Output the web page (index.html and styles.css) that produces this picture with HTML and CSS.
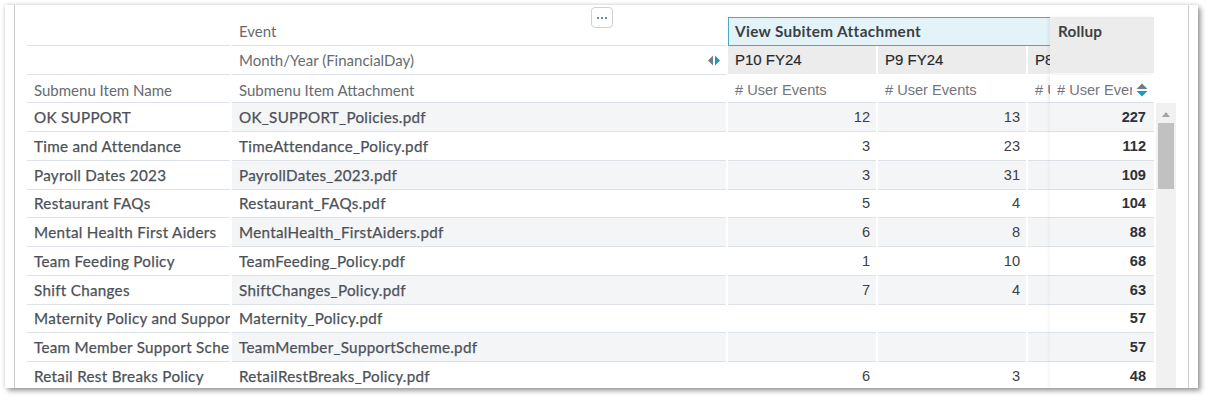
FILE: index.html
```html
<!DOCTYPE html>
<html lang="en">
<head>
<meta charset="utf-8">
<title>Submenu Attachments</title>
<link rel="stylesheet" href="styles.css">
</head>
<body>
<div class="panel">
  <div class="frame">
    <button class="more" type="button"><span class="dot"></span><span class="dot"></span><span class="dot"></span></button>
    <div class="grid">
      <!-- header row 1 -->
      <div class="hc c1 r1"></div>
      <div class="hc c2 r1 lbl">Event</div>
      <div class="group">View Subitem Attachment</div>
      <div class="rollup-h">Rollup</div>

      <!-- header row 2 -->
      <div class="hc c1 r2"></div>
      <div class="hc c2 r2 lbl split">
        <span>Month/Year (FinancialDay)</span>
        <svg class="swap" width="12" height="11" viewBox="0 0 12 11"><path d="M5 0.5 L0 5.5 L5 10.5 Z" fill="#6d7d8b"/><path d="M7 0.5 L12 5.5 L7 10.5 Z" fill="#1a97c3"/></svg>
      </div>
      <div class="period c3">P10 FY24</div>
      <div class="period c4">P9 FY24</div>
      <div class="period c5">P8 FY24</div>

      <!-- header row 3 -->
      <div class="hc c1 r3 lbl">Submenu Item Name</div>
      <div class="hc c2 r3 lbl">Submenu Item Attachment</div>
      <div class="mh c3"><span># User Events</span></div>
      <div class="mh c4"><span># User Events</span></div>
      <div class="mh c5"><span># User Events</span></div>
      <div class="mh c6 roll sorter">
        <span class="clip"># User Events</span>
        <svg class="sort" width="12" height="14" viewBox="0 0 12 14"><path d="M6 0.5 L11.5 6 L0.5 6 Z" fill="#6d7d8b"/><path d="M0.5 8 L11.5 8 L6 13.5 Z" fill="#1a9bc4"/></svg>
      </div>

      <div class="scroll">
        <div class="up"></div>
        <div class="thumb"></div>
      </div>

      <!-- data rows -->
      <div class="d name">OK SUPPORT</div><div class="d file s">OK_SUPPORT_Policies.pdf</div><div class="d num s">12</div><div class="d num s">13</div><div class="d num s"></div><div class="d num tot s">227</div>
      <div class="d name">Time and Attendance</div><div class="d file">TimeAttendance_Policy.pdf</div><div class="d num">3</div><div class="d num">23</div><div class="d num"></div><div class="d num tot">112</div>
      <div class="d name">Payroll Dates 2023</div><div class="d file s">PayrollDates_2023.pdf</div><div class="d num s">3</div><div class="d num s">31</div><div class="d num s"></div><div class="d num tot s">109</div>
      <div class="d name">Restaurant FAQs</div><div class="d file">Restaurant_FAQs.pdf</div><div class="d num">5</div><div class="d num">4</div><div class="d num"></div><div class="d num tot">104</div>
      <div class="d name">Mental Health First Aiders</div><div class="d file s">MentalHealth_FirstAiders.pdf</div><div class="d num s">6</div><div class="d num s">8</div><div class="d num s"></div><div class="d num tot s">88</div>
      <div class="d name">Team Feeding Policy</div><div class="d file">TeamFeeding_Policy.pdf</div><div class="d num">1</div><div class="d num">10</div><div class="d num"></div><div class="d num tot">68</div>
      <div class="d name">Shift Changes</div><div class="d file s">ShiftChanges_Policy.pdf</div><div class="d num s">7</div><div class="d num s">4</div><div class="d num s"></div><div class="d num tot s">63</div>
      <div class="d name">Maternity Policy and Support</div><div class="d file">Maternity_Policy.pdf</div><div class="d num"></div><div class="d num"></div><div class="d num"></div><div class="d num tot">57</div>
      <div class="d name">Team Member Support Scheme</div><div class="d file s">TeamMember_SupportScheme.pdf</div><div class="d num s"></div><div class="d num s"></div><div class="d num s"></div><div class="d num tot s">57</div>
      <div class="d name">Retail Rest Breaks Policy</div><div class="d file">RetailRestBreaks_Policy.pdf</div><div class="d num">6</div><div class="d num">3</div><div class="d num"></div><div class="d num tot">48</div>
    </div>
  </div>
</div>
</body>
</html>
```

FILE: styles.css
```css
* { box-sizing: border-box; }

html, body {
  margin: 0;
  padding: 0;
  background: #ffffff;
}

body {
  width: 1206px;
  height: 396px;
  overflow: hidden;
  font-family: "Lato", "Open Sans", sans-serif;
}

.panel {
  margin: 5px 0 0 5px;
  width: 1193px;
  height: 383px;
  background: #ffffff;
  box-shadow: 0 0 4px rgba(0, 0, 0, 0.18), 3px 3px 5px rgba(0, 0, 0, 0.35);
  overflow: hidden;
}

.frame {
  position: relative;
  margin: 0 9px;
  height: 100%;
  border-left: 1px solid #cdcdcd;
  border-right: 1px solid #cdcdcd;
  padding: 12px 0 0 12px;
  overflow: hidden;
}

.more {
  position: absolute;
  left: 576px;
  top: 2px;
  width: 22px;
  height: 21px;
  padding: 0;
  border: 1px solid #c9d1db;
  border-radius: 4px;
  background: #ffffff;
  display: flex;
  align-items: center;
  justify-content: center;
  gap: 2px;
}

.dot {
  width: 2px;
  height: 2px;
  background: #6f8aa6;
  margin-top: 1px;
}

.grid {
  display: grid;
  grid-template-columns: 203px 494px 148px 148px 22px 102px 20px;
  grid-auto-rows: 28.75px;
  column-gap: 2px;
  font-size: 15px;
}

.grid > div {
  min-width: 0;
}

/* header cells on the left */
.hc {
  border-bottom: 1px solid #dde1e8;
  padding: 0 7px;
  display: flex;
  align-items: center;
  white-space: nowrap;
  overflow: hidden;
}

.c1 { grid-column: 1; }
.c2 { grid-column: 2; }
.c3 { grid-column: 3; }
.c4 { grid-column: 4; }
.c5 { grid-column: 5; }
.c6 { grid-column: 6; margin-left: -2px; }

.r1 { grid-row: 1; }
.r2 { grid-row: 2; }
.r3 { grid-row: 3; padding-top: 3px; }

.lbl {
  color: #676b71;
}

.split {
  justify-content: space-between;
  padding-right: 6px;
}

.swap { flex: none; margin-top: 1px; }

.group {
  grid-row: 1;
  grid-column: 3 / 6;
  border: 1px solid #48aacb;
  border-right: none;
  background: #e4f3f8;
  color: #3b3f44;
  font-weight: 700;
  font-size: 15.3px;
  letter-spacing: 0.35px;
  padding: 0 6px;
  display: flex;
  align-items: center;
  padding-bottom: 1px;
}

.rollup-h {
  grid-row: 1 / 3;
  grid-column: 6;
  margin-left: -2px;
  background: #ececec;
  color: #3b3f44;
  font-weight: 700;
  font-size: 15.3px;
  letter-spacing: 0.2px;
  padding: 4px 8px 0;
  height: 56px;
  line-height: 20px;
  position: relative;
  z-index: 1;
  box-shadow: -2px 0 3px rgba(0, 0, 0, 0.06);
}

.period {
  grid-row: 2;
  background: #ececec;
  border-bottom: 1px solid #ffffff;
  color: #25282c;
  font-family: "Liberation Sans", Arial, sans-serif;
  font-size: 15px;
  -webkit-text-stroke: 0.15px #25282c;
  padding: 0 7px;
  display: flex;
  align-items: center;
  white-space: nowrap;
  overflow: hidden;
}

.mh {
  grid-row: 3;
  padding-top: 3px;
  border-bottom: 1px solid #dde1e8;
  color: #72767c;
  font-family: "Liberation Sans", Arial, sans-serif;
  font-size: 14.6px;
  padding-left: 7px;
  padding-right: 7px;
  display: flex;
  align-items: center;
  white-space: nowrap;
  overflow: hidden;
}

.roll {
  position: relative;
  z-index: 1;
  background: #ffffff;
  box-shadow: -2px 0 3px rgba(0, 0, 0, 0.08);
}

.sorter {
  justify-content: space-between;
  padding-right: 6px;
  gap: 4px;
}

.clip {
  overflow: hidden;
  min-width: 0;
}

.sort { flex: none; }

/* scrollbar */
.scroll {
  grid-column: 7;
  grid-row: 4 / span 10;
  background: #f1f1f1;
  position: relative;
}

.up {
  margin: 9px auto 0;
  width: 0;
  height: 0;
  border-left: 4px solid transparent;
  border-right: 4px solid transparent;
  border-bottom: 5px solid #a3a3a3;
}

.thumb {
  margin: 6px 2px 0;
  height: 66px;
  background: #c1c1c1;
}

/* data cells */
.d {
  border-bottom: 1px solid #dde2e9;
  padding: 0 7px;
  display: flex;
  align-items: center;
  white-space: nowrap;
  overflow: hidden;
  color: #50555b;
}

.name,
.file {
  font-weight: 400;
  font-size: 15.2px;
  letter-spacing: 0.3px;
  color: #4c5157;
  -webkit-text-stroke: 0.25px #4c5157;
}

.name { grid-column: 1; }

.num {
  justify-content: flex-end;
  padding-right: 6px;
  color: #3d4044;
  font-family: "Liberation Sans", Arial, sans-serif;
  font-size: 14.6px;
}

.tot {
  grid-column: 6;
  margin-left: -2px;
  font-weight: 700;
  color: #2e3135;
  padding-right: 8px;
  position: relative;
  z-index: 1;
  box-shadow: -2px 0 3px rgba(0, 0, 0, 0.04);
}

.d.tot:not(.s) { background: #ffffff; }

.s { background: #f4f5f7; }
```
